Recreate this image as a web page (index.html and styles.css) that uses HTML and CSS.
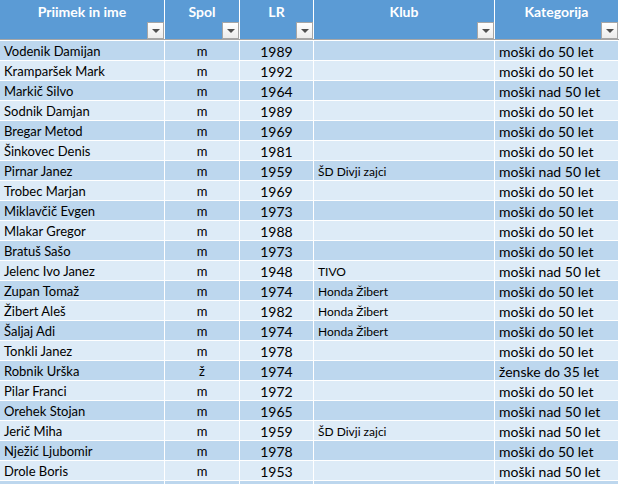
FILE: index.html
```html
<!DOCTYPE html>
<html>
<head>
<meta charset="utf-8">
<link rel="stylesheet" href="styles.css">
</head>
<body>
<div class="sheet">
  <div class="head">
    <div class="hcell"><span class="htext">Priimek in ime</span><span class="dd"></span></div>
    <div class="hcell"><span class="htext">Spol</span><span class="dd"></span></div>
    <div class="hcell"><span class="htext">LR</span><span class="dd"></span></div>
    <div class="hcell"><span class="htext">Klub</span><span class="dd"></span></div>
    <div class="hcell"><span class="htext">Kategorija</span><span class="dd"></span></div>
  </div>
  <div class="hline"></div>
  <div class="body">
    <div class="row"><div class="c name">Vodenik Damijan</div><div class="c mid">m</div><div class="c mid yr">1989</div><div class="c klub"></div><div class="c kat">moški do 50 let</div></div>
    <div class="row"><div class="c name">Kramparšek Mark</div><div class="c mid">m</div><div class="c mid yr">1992</div><div class="c klub"></div><div class="c kat">moški do 50 let</div></div>
    <div class="row"><div class="c name">Markič Silvo</div><div class="c mid">m</div><div class="c mid yr">1964</div><div class="c klub"></div><div class="c kat">moški nad 50 let</div></div>
    <div class="row"><div class="c name">Sodnik Damjan</div><div class="c mid">m</div><div class="c mid yr">1989</div><div class="c klub"></div><div class="c kat">moški do 50 let</div></div>
    <div class="row"><div class="c name">Bregar Metod</div><div class="c mid">m</div><div class="c mid yr">1969</div><div class="c klub"></div><div class="c kat">moški do 50 let</div></div>
    <div class="row"><div class="c name">Šinkovec Denis</div><div class="c mid">m</div><div class="c mid yr">1981</div><div class="c klub"></div><div class="c kat">moški do 50 let</div></div>
    <div class="row"><div class="c name">Pirnar Janez</div><div class="c mid">m</div><div class="c mid yr">1959</div><div class="c klub">ŠD Divji zajci</div><div class="c kat">moški nad 50 let</div></div>
    <div class="row"><div class="c name">Trobec Marjan</div><div class="c mid">m</div><div class="c mid yr">1969</div><div class="c klub"></div><div class="c kat">moški do 50 let</div></div>
    <div class="row"><div class="c name">Miklavčič Evgen</div><div class="c mid">m</div><div class="c mid yr">1973</div><div class="c klub"></div><div class="c kat">moški do 50 let</div></div>
    <div class="row"><div class="c name">Mlakar Gregor</div><div class="c mid">m</div><div class="c mid yr">1988</div><div class="c klub"></div><div class="c kat">moški do 50 let</div></div>
    <div class="row"><div class="c name">Bratuš Sašo</div><div class="c mid">m</div><div class="c mid yr">1973</div><div class="c klub"></div><div class="c kat">moški do 50 let</div></div>
    <div class="row"><div class="c name">Jelenc Ivo Janez</div><div class="c mid">m</div><div class="c mid yr">1948</div><div class="c klub">TIVO</div><div class="c kat">moški nad 50 let</div></div>
    <div class="row"><div class="c name">Zupan Tomaž</div><div class="c mid">m</div><div class="c mid yr">1974</div><div class="c klub">Honda Žibert</div><div class="c kat">moški do 50 let</div></div>
    <div class="row"><div class="c name">Žibert Aleš</div><div class="c mid">m</div><div class="c mid yr">1982</div><div class="c klub">Honda Žibert</div><div class="c kat">moški do 50 let</div></div>
    <div class="row"><div class="c name">Šaljaj Adi</div><div class="c mid">m</div><div class="c mid yr">1974</div><div class="c klub">Honda Žibert</div><div class="c kat">moški do 50 let</div></div>
    <div class="row"><div class="c name">Tonkli Janez</div><div class="c mid">m</div><div class="c mid yr">1978</div><div class="c klub"></div><div class="c kat">moški do 50 let</div></div>
    <div class="row"><div class="c name">Robnik Urška</div><div class="c mid">ž</div><div class="c mid yr">1974</div><div class="c klub"></div><div class="c kat">ženske do 35 let</div></div>
    <div class="row"><div class="c name">Pilar Franci</div><div class="c mid">m</div><div class="c mid yr">1972</div><div class="c klub"></div><div class="c kat">moški do 50 let</div></div>
    <div class="row"><div class="c name">Orehek Stojan</div><div class="c mid">m</div><div class="c mid yr">1965</div><div class="c klub"></div><div class="c kat">moški nad 50 let</div></div>
    <div class="row"><div class="c name">Jerič Miha</div><div class="c mid">m</div><div class="c mid yr">1959</div><div class="c klub">ŠD Divji zajci</div><div class="c kat">moški nad 50 let</div></div>
    <div class="row"><div class="c name">Nježić Ljubomir</div><div class="c mid">m</div><div class="c mid yr">1978</div><div class="c klub"></div><div class="c kat">moški do 50 let</div></div>
    <div class="row"><div class="c name">Drole Boris</div><div class="c mid">m</div><div class="c mid yr">1953</div><div class="c klub"></div><div class="c kat">moški nad 50 let</div></div>
    <div class="row"><div class="c name"></div><div class="c mid"></div><div class="c mid yr"></div><div class="c klub"></div><div class="c kat"></div></div>
  </div>
</div>
</body>
</html>
```

FILE: styles.css
```css
html, body {
  margin: 0;
  padding: 0;
  background: #ffffff;
}
body {
  font-family: Lato, "Open Sans", sans-serif;
  color: #000000;
  overflow: hidden;
}
.sheet {
  width: 618px;
}
.head {
  display: grid;
  grid-template-columns: 164px 74px 73px 180px 123px;
  column-gap: 1px;
  height: 39px;
}
.hcell {
  background: #5b9bd5;
  display: flex;
  flex-direction: column;
  align-items: center;
}
.htext {
  color: #ffffff;
  font-weight: bold;
  font-size: 14px;
  line-height: 16px;
  margin-top: 4px;
}
.dd {
  margin-top: auto;
  align-self: flex-end;
  width: 15px;
  height: 15px;
  border: 1px solid #a6a6a6;
  background: linear-gradient(#ffffff, #ececec);
  display: flex;
  align-items: center;
  justify-content: center;
}
.dd::after {
  content: "";
  width: 0;
  height: 0;
  border-left: 4px solid transparent;
  border-right: 4px solid transparent;
  border-top: 4px solid #505050;
  margin-top: 1px;
}
.hline {
  height: 1px;
  background: #a6a6a6;
  width: 619px;
  margin-bottom: 1px;
}
.body {
  display: flex;
  flex-direction: column;
  row-gap: 1px;
}
.row {
  display: grid;
  grid-template-columns: 164px 74px 73px 180px 123px;
  column-gap: 1px;
  height: 19px;
}
.row:nth-child(odd) .c { background: #bdd7ee; }
.row:nth-child(even) .c { background: #ddebf7; }
.c {
  box-sizing: border-box;
  height: 19px;
  padding-top: 1px;
  font-size: 13px;
  line-height: 19px;
  white-space: nowrap;
  overflow: hidden;
}
.name { padding-left: 4px; }
.mid { text-align: center; }
.yr { font-size: 14px; }
.klub { padding-left: 4px; font-size: 12px; }
.kat { padding-left: 4px; font-size: 14px; }
```
